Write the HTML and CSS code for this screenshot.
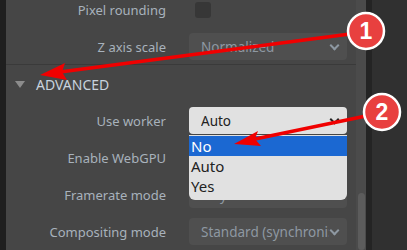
FILE: index.html
```html
<!DOCTYPE html>
<html lang="en">
<head>
    <meta charset="UTF-8">
    <title>Advanced settings</title>
    <link rel="stylesheet" href="styles.css">
</head>
<body>
    <div class="window">
        <div class="edge"></div>

        <div class="panel">
            <div class="row">
                <label>Pixel rounding</label>
                <div class="control"><span class="checkbox"></span></div>
            </div>
            <div class="row">
                <label>Z axis scale</label>
                <div class="control"><div class="select"><span class="value">Normalized</span><span class="chevron"></span></div></div>
            </div>

            <div class="separator"></div>

            <div class="section-head">
                <span class="triangle"></span>
                <span class="section-title">ADVANCED</span>
            </div>

            <div class="row">
                <label>Use worker</label>
                <div class="control">
                    <div class="select open"><span class="value">Auto</span><span class="chevron"></span></div>
                    <ul class="menu">
                        <li class="active">No</li>
                        <li>Auto</li>
                        <li>Yes</li>
                    </ul>
                </div>
            </div>
            <div class="row">
                <label>Enable WebGPU</label>
                <div class="control"><span class="checkbox"></span></div>
            </div>
            <div class="row">
                <label>Framerate mode</label>
                <div class="control"><div class="select"><span class="value">V-synced</span><span class="chevron"></span></div></div>
            </div>
            <div class="row">
                <label>Compositing mode</label>
                <div class="control"><div class="select"><span class="value">Standard (synchroni:</span><span class="chevron"></span></div></div>
            </div>
        </div>

        <div class="scrollbar"><div class="thumb"></div></div>
        <div class="divider"></div>
        <div class="side"></div>
    </div>

    <!-- callout arrows -->
    <svg class="callouts" width="407" height="250" viewBox="0 0 407 250">
        <line x1="350" y1="34" x2="60" y2="72" stroke="#f00000" stroke-width="3.5"/>
        <polygon points="40,75 67,80 62,72 65,63" fill="#f00000"/>
        <circle cx="366" cy="31" r="18" fill="#e8403f" stroke="#fff" stroke-width="2.5"/>
        <text x="366" y="39" class="num">1</text>

        <line x1="366" y1="116" x2="255" y2="139" stroke="#f00000" stroke-width="3.5"/>
        <polygon points="234,144 261,146 255,139 258,131" fill="#f00000"/>
        <circle cx="382" cy="112" r="18" fill="#e8403f" stroke="#fff" stroke-width="2.5"/>
        <text x="382" y="120" class="num">2</text>
    </svg>
</body>
</html>
```

FILE: styles.css
```css
* {
    margin: 0;
    padding: 0;
    box-sizing: border-box;
}

body {
    font-family: 'Noto Sans', 'Open Sans', sans-serif;
    background: #2f2f2f;
    width: 407px;
    height: 250px;
    overflow: hidden;
    position: relative;
}

.window {
    display: flex;
    height: 250px;
}

.edge {
    width: 6px;
    background: #1f1f1f;
}

.panel {
    width: 350px;
    background: #464646;
    display: flex;
    flex-direction: column;
    gap: 10px;
    margin-top: -4px;
}

.row {
    display: grid;
    grid-template-columns: 160px 158px;
    column-gap: 23px;
    align-items: center;
    height: 27px;
}

.row label {
    text-align: right;
    color: #a8b2bc;
    font-size: 13px;
}

.control {
    position: relative;
    height: 27px;
    display: flex;
    align-items: center;
}

.checkbox {
    width: 16px;
    height: 16px;
    margin-left: 6px;
    border-radius: 3px;
    background: #373737;
}

.select {
    width: 100%;
    height: 27px;
    border-radius: 4px;
    background: #4f4f4f;
    color: #8e98a2;
    font-size: 13.5px;
    padding: 0 18px 0 12px;
    display: flex;
    align-items: center;
    position: relative;
}

.value {
    flex: 1;
    white-space: nowrap;
    overflow: hidden;
}

.chevron {
    position: absolute;
    right: 9px;
    top: 9px;
    width: 7px;
    height: 7px;
    border-right: 2px solid #8e98a2;
    border-bottom: 2px solid #8e98a2;
    transform: rotate(45deg);
}

.select.open {
    background: #e1e1e1;
    color: #222;
}

.select.open .chevron {
    border-color: #222;
}

.menu {
    list-style: none;
    position: absolute;
    top: 28px;
    left: 0;
    width: 100%;
    background: #e1e1e1;
    border-radius: 0 0 6px 6px;
    padding: 1px 0 4px;
    z-index: 2;
}

.menu li {
    height: 20px;
    line-height: 20px;
    padding-left: 2px;
    font-size: 15px;
    color: #222;
}

.menu li.active {
    background: #1b68d2;
    color: #fff;
}

.separator {
    height: 1px;
    background: #3a3a3a;
    margin-top: -6px;
}

.section-head {
    height: 27px;
    display: flex;
    align-items: center;
    padding-left: 9px;
    gap: 11px;
    margin-top: -4px;
    margin-bottom: -1px;
}

.triangle {
    width: 0;
    height: 0;
    border-left: 5px solid transparent;
    border-right: 5px solid transparent;
    border-top: 7px solid #8c8c8c;
}

.section-title {
    color: #c9d3de;
    font-size: 14px;
}

.scrollbar {
    width: 10px;
    background: #4b4b4b;
    position: relative;
}

.thumb {
    position: absolute;
    left: 2px;
    right: 1px;
    top: 193px;
    bottom: 0;
    border-radius: 4px;
    background: #5c5c5c;
}

.divider {
    width: 6px;
    background: #242424;
}

.side {
    flex: 1;
    background: #303030;
}

.callouts {
    position: absolute;
    top: 0;
    left: 0;
    z-index: 5;
    pointer-events: none;
}

.num {
    fill: #fff;
    font-family: 'Liberation Sans', sans-serif;
    font-weight: bold;
    font-size: 23px;
    text-anchor: middle;
}
```
